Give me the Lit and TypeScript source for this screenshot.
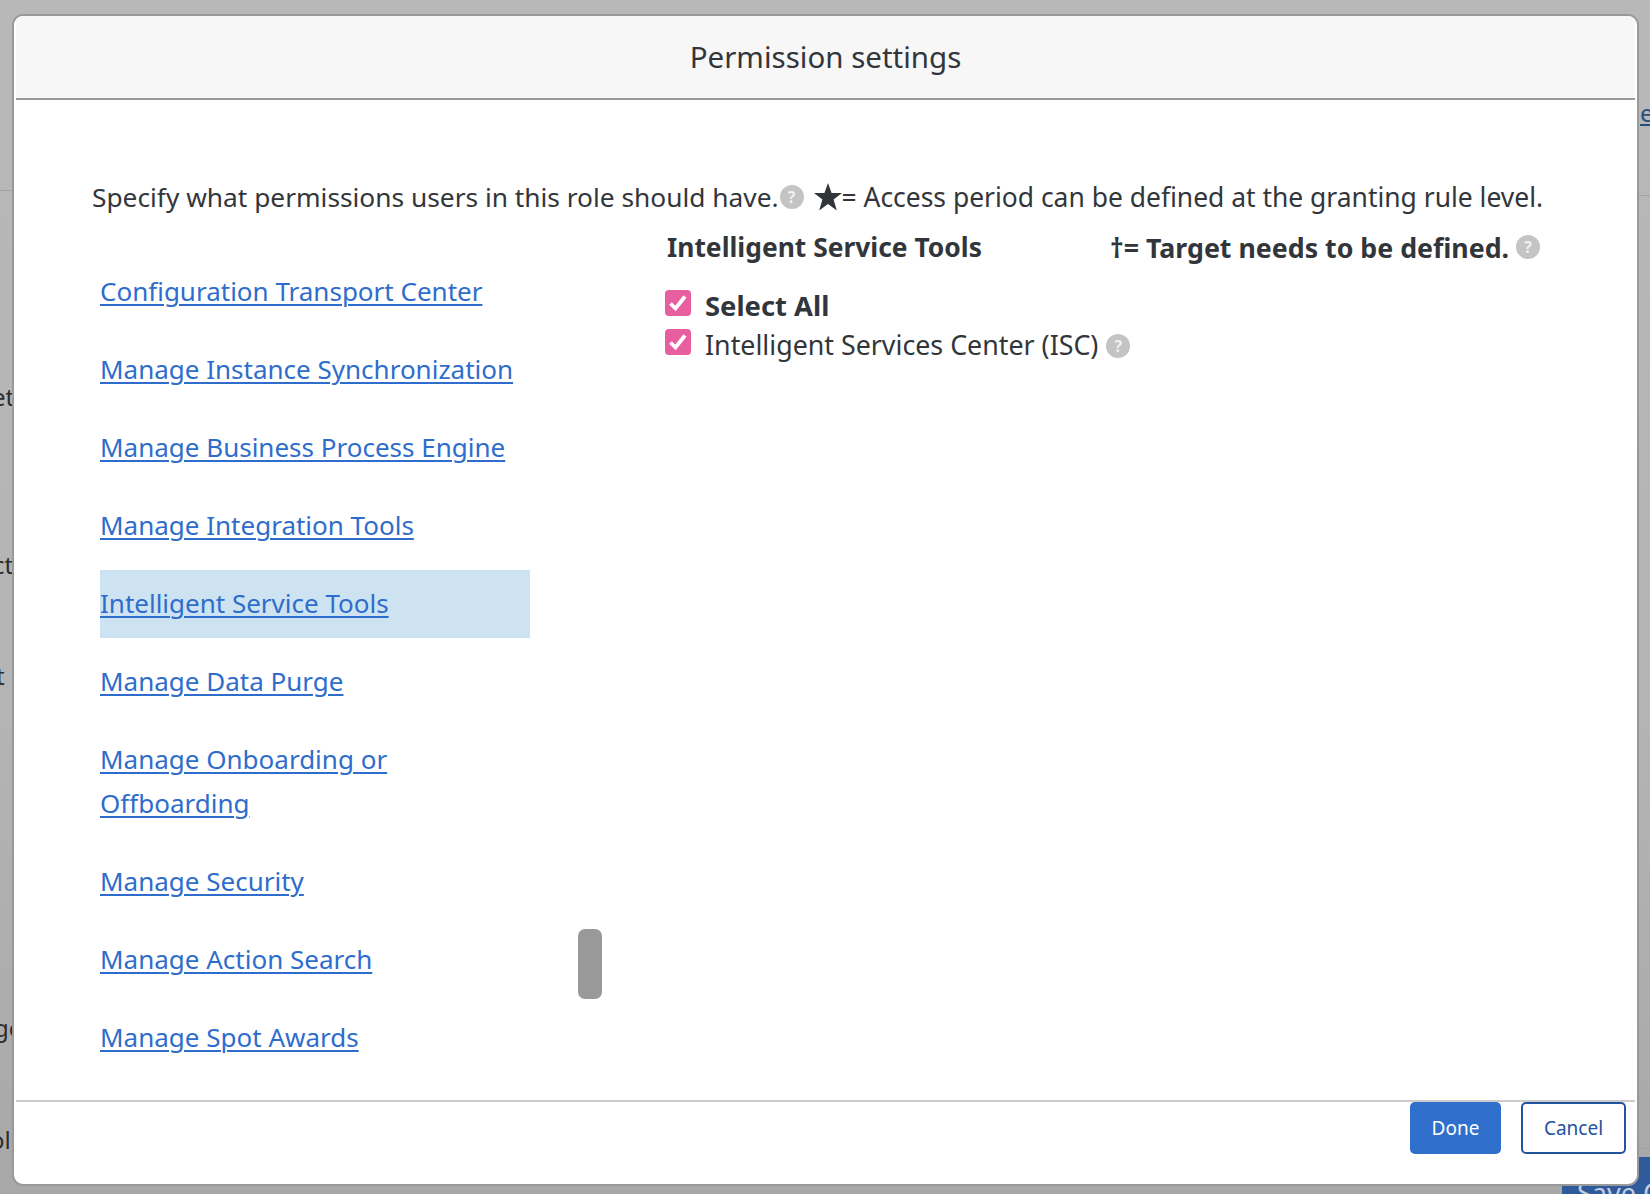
import { LitElement, html, css } from "lit";
import { customElement } from "lit/decorators.js";

const links = [
  "Configuration Transport Center",
  "Manage Instance Synchronization",
  "Manage Business Process Engine",
  "Manage Integration Tools",
  "Intelligent Service Tools",
  "Manage Data Purge",
  "Manage Onboarding or Offboarding",
  "Manage Security",
  "Manage Action Search",
  "Manage Spot Awards",
];
const ACTIVE = "Intelligent Service Tools";

const help = html`<span class="help">?</span>`;
const check = html`<svg class="check" viewBox="0 0 26 26" aria-hidden="true">
  <rect width="26" height="26" rx="4" fill="#e85f9f"></rect>
  <path d="M5.5 13.5 L10.5 18.5 L20 6.5" fill="none" stroke="#fff" stroke-width="3.8"></path>
</svg>`;

@customElement("app-root")
export class AppRoot extends LitElement {
  static styles = css`
    :host {
      display: block;
      position: relative;
      height: 1194px;
      overflow: hidden;
      box-sizing: border-box;
      padding: 14px 11px 8px 12px;
      background: linear-gradient(180deg, #b8b8b8 0%, #b4b4b4 60%, #a8a8a8 100%);
      font-family: "Noto Sans", "Open Sans", sans-serif;
      color: #32363a;
    }
    .behind {
      position: absolute;
      font-size: 24px;
      line-height: 30px;
      color: #2c2c2c;
      white-space: nowrap;
    }
    .rule {
      position: absolute;
      height: 1px;
      background: #a2a2a2;
    }
    .save {
      position: absolute;
      left: 1562px;
      top: 1157px;
      width: 88px;
      height: 37px;
      box-sizing: border-box;
      background: #2f5a9c;
      color: #c2cede;
      font-size: 27px;
      line-height: 72px;
      padding-left: 15px;
      overflow: hidden;
      white-space: nowrap;
    }
    .modal {
      position: relative;
      box-sizing: border-box;
      height: 1172px;
      display: flex;
      flex-direction: column;
      padding: 0 2px;
      background: #fff;
      border: 2px solid #999;
      border-radius: 11px;
      overflow: hidden;
    }
    .head {
      flex: none;
      height: 84px;
      box-sizing: border-box;
      padding-bottom: 2px;
      background: #f7f7f7;
      border-bottom: 2px solid #999;
      display: flex;
      align-items: center;
      justify-content: center;
      font-size: 29.5px;
    }
    .body {
      flex: 1;
      min-height: 0;
      padding: 79px 0 0 76px;
      display: flex;
      flex-direction: column;
    }
    .intro {
      display: flex;
      align-items: center;
      height: 36px;
      font-size: 26.3px;
      white-space: nowrap;
    }
    .help {
      flex: none;
      display: inline-flex;
      align-items: center;
      justify-content: center;
      width: 24px;
      height: 24px;
      border-radius: 50%;
      background: #c4c4c4;
      color: #f2f2f2;
      font-size: 16px;
      font-weight: 700;
      filter: blur(0.6px);
    }
    .intro .help {
      margin-left: 1px;
    }
    .star {
      flex: none;
      width: 30px;
      height: 30px;
      margin-left: 9px;
      margin-right: -1px;
      fill: #32363a;
    }
    .tail {
      font-size: 26.45px;
    }
    .columns {
      flex: 1;
      min-height: 0;
      display: flex;
    }
    .list {
      flex: none;
      width: 430px;
      margin: 43px 0 0 8px;
      display: flex;
      flex-direction: column;
      gap: 10px;
    }
    .row {
      padding: 11px 0 13px;
      font-size: 26px;
      line-height: 44px;
    }
    .row.active {
      background: #cde3f1;
    }
    .row a {
      color: #2e6dcc;
      text-decoration: underline;
      text-decoration-thickness: 2px;
      text-underline-offset: 3px;
    }
    .track {
      flex: none;
      margin: 0 0 0 48px;
      width: 24px;
    }
    .thumb {
      width: 24px;
      height: 70px;
      margin-top: 714px;
      border-radius: 7px;
      background: #999;
    }
    .detail {
      flex: 1;
      margin-left: 65px;
      font-size: 26.4px;
    }
    .detail-head {
      display: flex;
      align-items: center;
      height: 36px;
      margin-top: 14px;
      font-weight: 700;
      white-space: nowrap;
    }
    .detail-head .title {
      width: 443px;
    }
    .detail-head .target {
      font-size: 26.75px;
    }
    .detail-head .help {
      margin-left: 7px;
    }
    .options {
      margin: 23px 0 0 -2px;
      display: flex;
      flex-direction: column;
      gap: 3px;
      font-size: 26.8px;
    }
    .option {
      display: flex;
      align-items: flex-start;
      height: 36px;
      line-height: 36px;
      white-space: nowrap;
    }
    .option.all {
      font-weight: 700;
      font-size: 27.4px;
    }
    .check {
      flex: none;
      width: 26px;
      height: 26px;
      margin: 2px 14px 0 0;
    }
    .option .help {
      margin: 7px 0 0 8px;
    }
    .foot {
      flex: none;
      height: 84px;
      border-top: 2px solid #ccc;
      box-sizing: border-box;
      display: flex;
      justify-content: flex-end;
      gap: 20px;
      padding-right: 9px;
    }
    button {
      box-sizing: border-box;
      height: 52px;
      margin-top: 0;
      font: inherit;
      font-size: 19px;
      border-radius: 5px;
    }
    .done {
      width: 91px;
      border: 0;
      background: #316fcc;
      color: #fff;
    }
    .cancel {
      width: 105px;
      border: 2px solid #22539f;
      background: #fff;
      color: #22539f;
    }
  `;

  render() {
    return html`
      <span class="rule" style="left:0;top:190px;width:14px"></span>
      <span class="rule" style="left:1638px;top:195px;width:12px"></span>
      <span class="rule" style="left:1638px;top:1148px;width:12px"></span>
      <span class="behind" style="left:-8px;top:382px">et</span>
      <span class="behind" style="left:-7px;top:550px">ct</span>
      <span class="behind" style="left:-4px;top:661px">t l</span>
      <span class="behind" style="left:-6px;top:1013px">ge</span>
      <span class="behind" style="left:-10px;top:1125px">ol.</span>
      <a class="behind" style="left:1640px;top:98px;color:#23507f;text-decoration:underline">e</a>
      <div class="save">Save C</div>

      <section class="modal">
        <header class="head">Permission settings</header>
        <div class="body">
          <div class="intro">
            Specify what permissions users in this role should have.${help}
            <svg class="star" viewBox="0 0 30 30" aria-hidden="true">
              <polygon points="15,1 18.6,11 29,11 20.6,17.6 23.8,28.4 15,22 6.2,28.4 9.4,17.6 1,11 11.4,11"></polygon>
            </svg><span class="tail">= Access period can be defined at the granting rule level.</span>
          </div>
          <div class="columns">
            <nav class="list">
              ${links.map(
                (l) => html`<div class="row ${l === ACTIVE ? "active" : ""}"><a href="#">${l}</a></div>`
              )}
            </nav>
            <div class="track"><div class="thumb"></div></div>
            <div class="detail">
              <div class="detail-head">
                <span class="title">Intelligent Service Tools</span>
                <span class="target">†= Target needs to be defined.</span>${help}
              </div>
              <div class="options">
                <div class="option all">${check}Select All</div>
                <div class="option">${check}Intelligent Services Center (ISC)${help}</div>
              </div>
            </div>
          </div>
        </div>
        <footer class="foot">
          <button class="done">Done</button>
          <button class="cancel">Cancel</button>
        </footer>
      </section>
    `;
  }
}
